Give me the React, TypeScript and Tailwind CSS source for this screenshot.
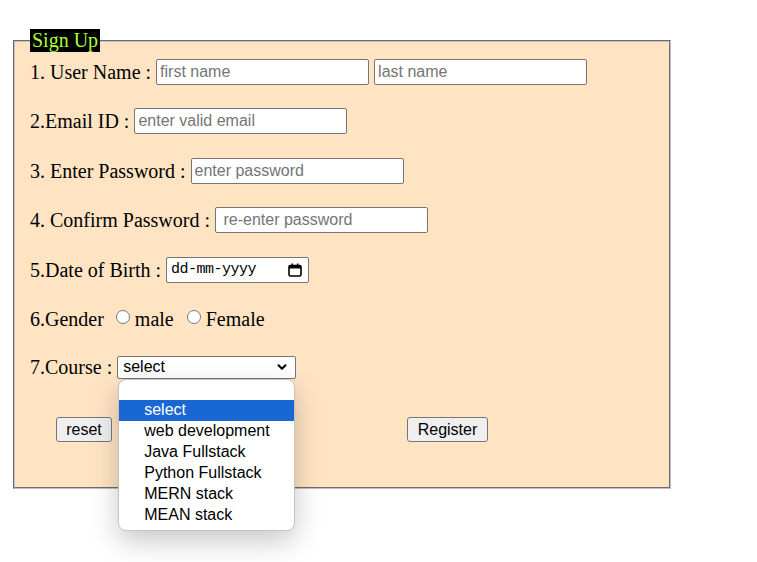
import { ChevronDown } from "lucide-react";

const courses = [
  "select",
  "web development",
  "Java Fullstack",
  "Python Fullstack",
  "MERN stack",
  "MEAN stack",
];

const inputClass =
  "h-[26px] w-[213px] rounded-[2px] border border-[#767676] bg-white px-[3px] font-['Liberation_Sans',Arial,sans-serif] text-[16px] text-black placeholder:text-[#757575] outline-none";

function Row({ className, children }: { className?: string; children: React.ReactNode }) {
  return <div className={`flex h-[26px] items-center gap-[5px] ${className ?? ""}`}>{children}</div>;
}

function CalendarIcon() {
  return (
    <svg width="14" height="14" viewBox="0 0 14 14" aria-hidden="true">
      <rect x="1" y="2.5" width="12" height="10.5" rx="1.5" fill="none" stroke="black" strokeWidth="1.6" />
      <rect x="1" y="2.5" width="12" height="3" fill="black" />
      <rect x="3.5" y="0.5" width="1.6" height="3" fill="black" />
      <rect x="8.9" y="0.5" width="1.6" height="3" fill="black" />
    </svg>
  );
}

function CourseSelect() {
  return (
    <div className="relative">
      <div className="flex h-[23px] w-[179px] items-center justify-between rounded-[2px] border border-[#767676] bg-white pl-[5px] pr-[6px] font-['Liberation_Sans',Arial,sans-serif] text-[16px] text-black">
        <span>select</span>
        <ChevronDown size={14} strokeWidth={3.5} className="text-black" />
      </div>
      <div className="absolute left-[1px] top-[23px] z-10 w-[177px] overflow-hidden rounded-[8px] border border-[#c4c4c4] bg-white pb-[4px] shadow-[0_10px_28px_rgba(0,0,0,0.22)] font-['Liberation_Sans',Arial,sans-serif] text-[16px] text-black">
        <div className="h-[20px]" />
        {courses.map((c, i) => (
          <div
            key={c}
            className={`flex h-[21px] items-center pl-[25px] leading-none ${
              i === 0 ? "bg-[#1967d2] text-white" : ""
            }`}
          >
            {c}
          </div>
        ))}
      </div>
    </div>
  );
}

export default function App() {
  return (
    <div className="min-h-[562px] w-[757px] bg-white pl-[13px] pt-[29px] font-['Liberation_Serif','Times_New_Roman',serif] text-[20px] text-black">
      <form>
        <fieldset className="m-0 w-[658px] border-2 border-[#c0c0c0] bg-[#ffe4c4] px-[15px] pb-[45px] pt-0 [border-style:groove]">
          <legend className="bg-black px-[2px] text-[20px] leading-[23px] text-[#adff2f]">Sign Up</legend>

          <Row className="mt-[7px]">
            <span>1. User Name :</span>
            <input className={inputClass} placeholder="first name" />
            <input className={inputClass} placeholder="last name" />
          </Row>

          <Row className="mt-[23px]">
            <span>2.Email ID :</span>
            <input className={inputClass} placeholder="enter valid email" />
          </Row>

          <Row className="mt-[24px]">
            <span>3. Enter Password :</span>
            <input className={inputClass} type="password" placeholder="enter password" />
          </Row>

          <Row className="mt-[23px]">
            <span>4. Confirm Password :</span>
            <input className={inputClass} type="password" placeholder=" re-enter password" />
          </Row>

          <Row className="mt-[24px]">
            <span>5.Date of Birth :</span>
            <div className="flex h-[26px] w-[143px] items-center justify-between rounded-[2px] border border-[#767676] bg-white pl-[4px] pr-[6px]">
              <span className="font-['Liberation_Mono','Courier_New',monospace] text-[15px] tracking-[-0.5px]">dd-mm-yyyy</span>
              <CalendarIcon />
            </div>
          </Row>

          <div className="mt-[23px] flex h-[26px] items-center">
            <span>6.Gender</span>
            <input type="radio" name="gender" className="ml-[12px] mr-[5px] mt-[-4px] h-[14px] w-[14px]" />
            <span>male</span>
            <input type="radio" name="gender" className="ml-[13px] mr-[5px] mt-[-4px] h-[14px] w-[14px]" />
            <span>Female</span>
          </div>

          <Row className="mt-[22px]">
            <span>7.Course :</span>
            <CourseSelect />
          </Row>

          <div className="mt-[37px] flex h-[25px] items-center font-['Liberation_Sans',Arial,sans-serif] text-[16px]">
            <button type="reset" className="ml-[26px] h-[25px] w-[56px] rounded-[3px] border border-[#767676] bg-[#efefef]">
              reset
            </button>
            <button type="button" className="ml-[295px] h-[25px] w-[81px] rounded-[3px] border border-[#767676] bg-[#efefef]">
              Register
            </button>
          </div>
        </fieldset>
      </form>
    </div>
  );
}
